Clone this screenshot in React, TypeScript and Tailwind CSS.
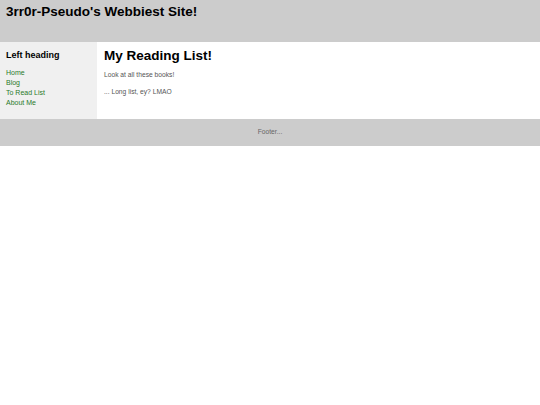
export default function App() {
  return (
    <div className="w-[540px] font-['Liberation_Sans',Arial,sans-serif] text-black">
      <header className="h-[42px] bg-[#cccccc] px-[6px] pt-[4px]">
        <h1 className="text-[13.5px] font-bold leading-[16px]">3rr0r-Pseudo's Webbiest Site!</h1>
      </header>
      <div className="flex h-[77px]">
        <aside className="w-[97px] bg-[#f0f0f0] px-[6px] pt-[8px]">
          <h2 className="text-[9px] font-bold leading-[11px]">Left heading</h2>
          <ul className="mt-[7px] text-[7px] leading-[10px] text-[#2a7a2a]">
            <li>Home</li>
            <li>Blog</li>
            <li>To Read List</li>
            <li>About Me</li>
          </ul>
        </aside>
        <main className="flex-1 bg-white px-[7px] pt-[6px]">
          <h2 className="text-[13.5px] font-bold leading-[16px]">My Reading List!</h2>
          <p className="mt-[6px] text-[6.7px] leading-[9px] text-[#555]">Look at all these books!</p>
          <p className="mt-[8px] text-[6.7px] leading-[9px] text-[#555]">... Long list, ey? LMAO</p>
        </main>
      </div>
      <footer className="h-[27px] bg-[#cccccc] flex items-center justify-center text-[6.7px] text-[#666]">
        Footer...
      </footer>
    </div>
  );
}
